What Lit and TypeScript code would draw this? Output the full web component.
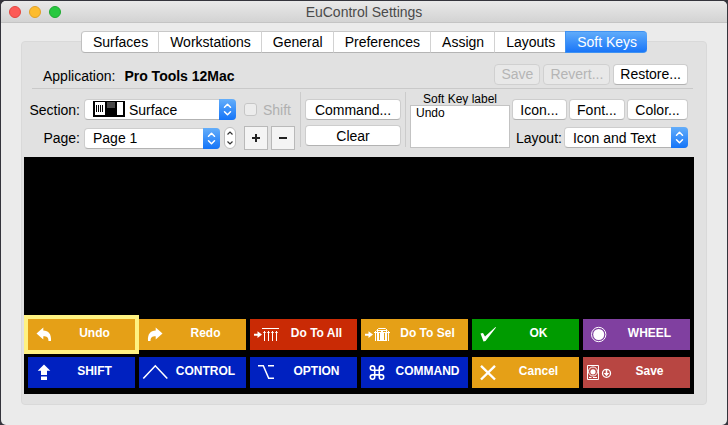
import { LitElement, html, svg, css } from "lit";
import { customElement, property } from "lit/decorators.js";
import { classMap } from "lit/directives/class-map.js";

const icons = {
  undo: svg`<path fill="#fff" d="M8.5 14.5 15.3 8.5V11.500C20.5 11.500 23.5 15 23 22H20.5C20.5 18.500 19 17.200 15.3 17.200V20.5Z"/>`,
  redo: svg`<path fill="#fff" d="M23.5 14.5 16.7 8.5V11.500C11.5 11.500 8.5 15 9 22H11.5C11.5 18.500 13 17.200 16.7 17.200V20.5Z"/>`,
  all: svg`<path fill="#fff" d="M4 14.7H7.5V12.2L12 15.6 7.5 19V16.7H4Z"/>
    <path fill="none" stroke="#fff" d="M12 9.5H29M14.5 12V22M18.5 12V22M22.5 12V22M26.5 12V22"/>
    <path fill="none" stroke="#fff" stroke-opacity=".75" d="M13 13.5H16M17 13.5H20M21 13.5H24M25 13.5H28"/>`,
  sel: svg`<path fill="#fff" d="M4 14.7H7.5V12.2L12 15.6 7.5 19V16.7H4Z"/>
    <path fill="#fff" d="M16 11H26V22H16Z"/>
    <path fill="none" stroke="#fff" d="M15.5 11.5 17.5 9.5H24.5L26.5 11.5M14.5 12V22M27.5 12V22M13 13.5H16M26 13.5H29"/>
    <path fill="none" stroke="#e5a017" d="M18.5 14V21M23.5 14V21M17 12.5H20M22 12.5H25"/>`,
  check: svg`<path fill="#fff" d="M8.5 14.5 11 14 13 17.5 23.5 8 24 8.5 13.5 22 11.5 22.5Z"/>`,
  wheel: svg`<circle cx="15.7" cy="15.5" r="7.200" fill="none" stroke="#fff"/><circle cx="15.7" cy="15.5" r="5.5" fill="#fff"/>`,
  shift: svg`<path fill="#fff" d="M16 7.5 22.3 13.8H19V18H13V13.8H9.7ZM13 19.5H19V23H13Z"/>`,
  control: svg`<path fill="none" stroke="#fff" stroke-width="1.6" d="M4.3 21.5 16.3 8.8 28.3 21.5"/>`,
  option: svg`<path fill="none" stroke="#fff" stroke-width="1.5" d="M8 8.7H13.3L18.7 21.3H24M18 8.7H24"/>`,
  command: svg`<path fill="none" stroke="#fff" stroke-width="1.6" d="M13.7 13.3H18.3V17.9H13.7ZM13.7 13.3H11.5A2.2 2.2 0 1 1 13.7 11.1ZM18.3 13.3V11.1A2.2 2.2 0 1 1 20.5 13.3ZM18.3 17.9H20.5A2.2 2.2 0 1 1 18.3 20.1ZM13.7 17.9V20.1A2.2 2.2 0 1 1 11.5 17.9Z"/>`,
  cancel: svg`<path fill="none" stroke="#fff" stroke-width="2.4" d="M9 8.8 23 22.5M23 8.8 9 22.5"/>`,
  save: svg`<path fill="none" stroke="#fff" d="M4.5 8.5H15.5V22.5H4.5Z"/>
    <circle cx="10" cy="14.5" r="4.5" fill="none" stroke="#fff"/>
    <circle cx="10" cy="14.8" r="2.6" fill="#fff"/>
    <path fill="none" stroke="#fff" d="M6 20.5H8.5M10 20.5H14"/>
    <circle cx="23.5" cy="16.3" r="4" fill="none" stroke="#fff" stroke-width="1.3"/>
    <path fill="#fff" d="M22.7 12H24.3V16H26.3L23.5 19.2 20.700 16H22.7Z"/>`,
};

type IconName = keyof typeof icons;
interface SoftKey { label: string; icon: IconName; tone: string; selected?: boolean }

const keys: SoftKey[] = [
  { label: "Undo", icon: "undo", tone: "amber", selected: true },
  { label: "Redo", icon: "redo", tone: "amber" },
  { label: "Do To All", icon: "all", tone: "red" },
  { label: "Do To Sel", icon: "sel", tone: "amber" },
  { label: "OK", icon: "check", tone: "green" },
  { label: "WHEEL", icon: "wheel", tone: "purple" },
  { label: "SHIFT", icon: "shift", tone: "blue" },
  { label: "CONTROL", icon: "control", tone: "blue" },
  { label: "OPTION", icon: "option", tone: "blue" },
  { label: "COMMAND", icon: "command", tone: "blue" },
  { label: "Cancel", icon: "cancel", tone: "amber" },
  { label: "Save", icon: "save", tone: "brick" },
];

const tabs = ["Surfaces", "Workstations", "General", "Preferences", "Assign", "Layouts", "Soft Keys"];

@customElement("soft-key")
class SoftKeyButton extends LitElement {
  @property({ attribute: false }) key!: SoftKey;

  static styles = css`
    :host { display: block; }
    .key {
      display: grid; grid-template-columns: 26px 1fr; align-items: center;
      width: 100%; height: 31px; margin: 0; padding: 0; border: 0;
      color: #fff; font: bold 12px/28px "Liberation Sans", Arial, sans-serif; text-align: center;
    }
    .glyph { width: 32px; height: 31px; overflow: visible; }
    .text { white-space: nowrap; padding-bottom: 3px; }
    .selected { box-shadow: 0 0 0 4px #fff282; }
    .amber { background: #e5a017; }
    .red { background: #c92a05; }
    .green { background: #009b00; }
    .purple { background: #8040a0; }
    .blue { background: #0021c0; }
    .brick { background: #b84642; }
  `;

  render() {
    const k = this.key;
    return html`<button class=${classMap({ key: true, [k.tone]: true, selected: !!k.selected })}>
      <svg class="glyph" viewBox="0 0 32 31" aria-hidden="true">${icons[k.icon]}</svg>
      <span class="text">${k.label}</span>
    </button>`;
  }
}

@customElement("app-root")
class AppRoot extends LitElement {
  static styles = css`
    :host {
      display: block; min-height: 100vh; box-sizing: border-box; padding: 1px 1px 0;
      background: #34343c; color: #000;
      font: 14px/20px "Liberation Sans", Arial, sans-serif;
    }
    * { box-sizing: border-box; }
    button, select, textarea { font: inherit; color: inherit; margin: 0; }
    .window { min-height: calc(100vh - 1px); background: #ebebeb; border-radius: 5px; overflow: hidden; }
    .titlebar {
      display: grid; grid-template-columns: 1fr auto 1fr; align-items: center;
      height: 22px; padding: 0 8px; border-bottom: 1px solid #c4c4c4;
      background: linear-gradient(#e9e9e9, #d3d3d3);
    }
    .lights { display: flex; gap: 8px; }
    .light { width: 12px; height: 12px; padding: 0; border: 1px solid; border-radius: 50%; }
    .close { background: #fc5b57; border-color: #e2463f; }
    .minimise { background: #fdbc2e; border-color: #e0a028; }
    .zoom { background: #28c840; border-color: #1fa931; }
    .title { margin: 0; font-size: 14px; font-weight: normal; color: #4a4a4a; }
    .panel {
      margin: 18px 20px 0; padding: 0 12px 10px 2px;
      background: #e1e1e1; border: 1px solid #d9d9d9; border-radius: 4px;
    }
    .tabs { display: flex; justify-content: center; margin: -11px -10px 0 0; }
    .tab {
      height: 22px; padding: 0 10px 0 11px; background: #fff; border: 0; line-height: 20px;
      border-left: 1px solid #d2d2d2; border-top: 1px solid #c8c8c8; border-bottom: 1px solid #b4b4b4;
    }
    .tab:first-child { border-radius: 4px 0 0 4px; border-left-color: #c0c0c0; }
    .tab.active {
      color: #fff; border-radius: 0 4px 4px 0; border-color: #3f92f2;
      background: linear-gradient(#5fabfa, #1a76f8);
    }
    .application {
      display: flex; align-items: center; gap: 3px; height: 36px; margin: 0 1px 0 8px;
      padding: 7px 5px 0 0; border-bottom: 1px solid #c9c9c9;
    }
    .app-label { margin-left: 11px; padding-top: 4px; }
    .app-name { flex: 1; margin-left: 6px; padding-top: 4px; font-size: 14px; }
    .push {
      height: 21px; padding: 0 10px; line-height: 18px; background: #fff; white-space: nowrap;
      border: 1px solid #cdcdcd; border-bottom-color: #b2b2b2; border-radius: 4px;
    }
    .push:disabled { color: #b5b5b5; background: #e8e8e8; border-color: #d0d0d0; }
    .application .push { padding: 0 6px; }
    .tools { display: flex; padding: 10px 6px 7px 0; }
    .choose {
      display: grid; grid-template-columns: 60px 152px 51px; grid-template-rows: 21px 24px;
      gap: 6px 0; align-items: center;
    }
    .caption { text-align: right; padding-right: 4px; }
    .choose > :nth-child(3n) { margin: 0 -8px 0 8px; }
    .drop { position: relative; flex: 1; min-width: 0; }
    .drop select {
      appearance: none; display: block; width: 100%; height: 21px; padding: 0 20px 0 8px;
      background: #fff; border: 1px solid #cdcdcd; border-bottom-color: #b2b2b2; border-radius: 4px;
      line-height: 18px;
    }
    .drop.pictured select { padding-left: 44px; }
    .arrows { position: absolute; right: 0; top: 0; width: 17px; height: 21px; pointer-events: none; }
    .surface { position: absolute; left: 9px; top: 2px; width: 32px; height: 16px; pointer-events: none; }
    .paged { display: flex; gap: 4px; align-items: center; }
    .stepper {
      display: flex; flex-direction: column; width: 12px; height: 22px; overflow: hidden;
      background: #fff; border: 1px solid #bdbdbd; border-radius: 6px;
    }
    .step { flex: 1; min-height: 0; padding: 0; border: 0; background: none; display: grid; place-items: center; }
    .step svg { width: 6px; height: 4px; }
    .shift { display: flex; align-items: center; gap: 6px; color: #b0b0b0; white-space: nowrap; }
    .shift input {
      appearance: none; flex: none; width: 13px; height: 13px; margin: 0;
      background: #ececec; border: 1px solid #c6c6c6; border-radius: 3px;
    }
    .pair { display: flex; gap: 3px; }
    .square {
      display: grid; place-items: center; flex: none; width: 24px; height: 24px; padding: 0;
      background: #f4f4f4; border: 1px solid #b9b9b9;
    }
    .square svg { width: 10px; height: 10px; }
    .rule { width: 1px; margin: -7px 4px 3px; background: #cbcbcb; }
    .choose + .rule { margin-left: 13px; }
    .commands { display: flex; flex-direction: column; gap: 5px; width: 96px; }
    .commands .push { padding: 0; }
    .naming { width: 100px; margin-right: 2px; margin-top: -6px; display: flex; flex-direction: column; }
    .naming label { font-size: 12px; line-height: 12px; text-align: center; }
    .naming textarea {
      width: 100%; height: 43px; padding: 0 5px; resize: none; overflow: hidden; outline: 0;
      border: 1px solid #c3c3c3; border-radius: 0; background: #fff; font-size: 12px; line-height: 14px;
    }
    .look { flex: 1; display: flex; flex-direction: column; gap: 7px; }
    .row { display: flex; gap: 2px; }
    .row .push { flex: auto; padding: 0 5px; }
    .layout-row { display: flex; align-items: center; gap: 2px; padding-left: 4px; }
    .surface-view {
      display: flex; flex-direction: column; justify-content: flex-end;
      min-height: 237px; padding: 4px 4px 6px; background: #000;
    }
    .keys { display: grid; grid-template-columns: repeat(6, 1fr); gap: 7px 4px; }
  `;

  private arrows() {
    return html`<svg class="arrows" viewBox="0 0 17 21" aria-hidden="true">
      <defs><linearGradient id="g" x2="0" y2="1"><stop stop-color="#64aefa"/><stop offset="1" stop-color="#1474f8"/></linearGradient></defs>
      <path fill="url(#g)" d="M0 0H13A4 4 0 0 1 17 4V17A4 4 0 0 1 13 21H0Z"/>
      <path fill="none" stroke="#fff" stroke-width="1.5" stroke-linecap="round" stroke-linejoin="round" d="M5.5 8.3 8.5 5.3 11.5 8.3M5.5 12.7 8.5 15.7 11.5 12.7"/>
    </svg>`;
  }

  render() {
    return html`<main class="window">
      <header class="titlebar">
        <div class="lights">
          <button class="light close" aria-label="Close"></button>
          <button class="light minimise" aria-label="Minimise"></button>
          <button class="light zoom" aria-label="Zoom"></button>
        </div>
        <h1 class="title">EuControl Settings</h1>
      </header>
      <section class="panel">
        <nav class="tabs" role="tablist">
          ${tabs.map((t) => html`<button role="tab" class=${classMap({ tab: true, active: t === "Soft Keys" })}
            aria-selected=${t === "Soft Keys"}>${t}</button>`)}
        </nav>
        <div class="application">
          <span class="app-label">Application:</span>
          <strong class="app-name">Pro Tools 12Mac</strong>
          <button class="push" disabled>Save</button>
          <button class="push" disabled>Revert...</button>
          <button class="push">Restore...</button>
        </div>
        <div class="tools">
          <div class="choose">
            <label class="caption" for="section">Section:</label>
            <div class="drop pictured">
              <select id="section"><option>Surface</option></select>
              <svg class="surface" viewBox="0 0 32 16" aria-hidden="true">
                <path d="M0 0H32V16H0Z"/><path fill="#fff" d="M2 1H12V14H2ZM24 1H30V14H24Z"/>
                <path fill="#484848" d="M14 1H22V7H14Z"/>
                <path stroke="#000" d="M3.5 4V11M5.5 4V11M7.5 4V11M9.5 4V11"/>
              </svg>
              ${this.arrows()}
            </div>
            <label class="shift"><input type="checkbox" disabled />Shift</label>
            <label class="caption" for="page">Page:</label>
            <div class="paged">
              <div class="drop"><select id="page"><option>Page 1</option></select>${this.arrows()}</div>
              <div class="stepper">
                <button class="step" aria-label="Next page"><svg viewBox="0 0 6 4"><path fill="none" stroke="#333" stroke-width="1.2" d="M.5 3.5 3 1 5.5 3.5"/></svg></button>
                <button class="step" aria-label="Previous page"><svg viewBox="0 0 6 4"><path fill="none" stroke="#333" stroke-width="1.2" d="M.5 .5 3 3 5.5 .5"/></svg></button>
              </div>
            </div>
            <div class="pair">
              <button class="square" aria-label="Add page"><svg viewBox="0 0 10 10"><path fill="#222" d="M4 1H6V4H9V6H6V9H4V6H1V4H4Z"/></svg></button>
              <button class="square" aria-label="Remove page"><svg viewBox="0 0 10 10"><path fill="#222" d="M1 4H9V6H1Z"/></svg></button>
            </div>
          </div>
          <div class="rule"></div>
          <div class="commands">
            <button class="push">Command...</button>
            <button class="push">Clear</button>
          </div>
          <div class="rule"></div>
          <div class="naming">
            <label for="label">Soft Key label</label>
            <textarea id="label" spellcheck="false" .value=${"Undo"}></textarea>
          </div>
          <div class="look">
            <div class="row">
              <button class="push">Icon...</button>
              <button class="push">Font...</button>
              <button class="push">Color...</button>
            </div>
            <div class="layout-row">
              <label for="layout">Layout:</label>
              <div class="drop"><select id="layout"><option>Icon and Text</option></select>${this.arrows()}</div>
            </div>
          </div>
        </div>
        <div class="surface-view">
          <div class="keys">${keys.map((k) => html`<soft-key .key=${k}></soft-key>`)}</div>
        </div>
      </section>
    </main>`;
  }
}
